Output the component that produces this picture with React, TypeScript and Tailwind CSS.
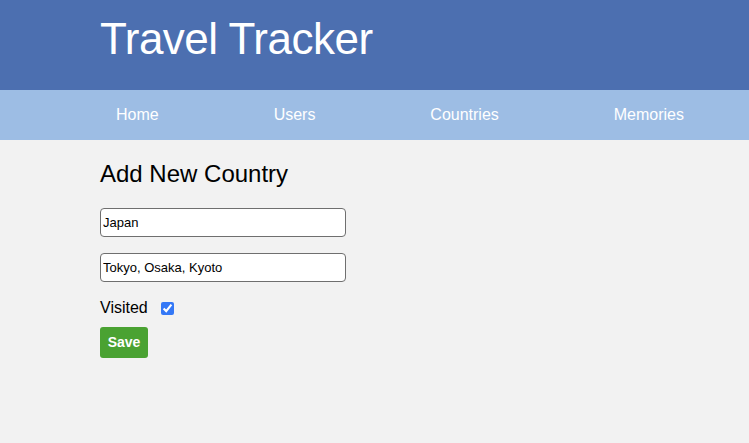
import React, { useState } from "react";

export default function App() {
  const [name, setName] = useState("Japan");
  const [cities, setCities] = useState("Tokyo, Osaka, Kyoto");
  const [visited, setVisited] = useState(true);

  const links = ["Home", "Users", "Countries", "Memories"];

  return (
    <div
      className="min-h-screen bg-[#f2f2f2] text-black"
      style={{ fontFamily: '"Liberation Sans", Arial, sans-serif' }}
    >
      {/* Header */}
      <header className="h-[90px] bg-[#4c6fb0] pl-[100px] pt-[17px]">
        <h1 className="text-[44px] leading-[44px] font-normal tracking-[-0.5px] text-white">
          Travel Tracker
        </h1>
      </header>

      {/* Nav */}
      <nav className="h-[50px] bg-[#9dbde4]">
        <ul className="ml-[100px] flex w-[600px] justify-between pt-[16px]">
          {links.map((l) => (
            <li key={l}>
              <a href="#" className="block px-4 text-[16px] leading-[18px] text-white">
                {l}
              </a>
            </li>
          ))}
        </ul>
      </nav>

      {/* Form */}
      <main className="pl-[100px] pt-[20px]">
        <h2 className="text-[24px] leading-[28px] font-normal">Add New Country</h2>
        <form className="mt-[20px] flex flex-col items-start" onSubmit={(e) => e.preventDefault()}>
          <input
            value={name}
            onChange={(e) => setName(e.target.value)}
            className="h-[29px] w-[246px] rounded-[4px] border border-[#6f6f6f] bg-white px-[2px] text-[13px] text-black outline-none"
          />
          <input
            value={cities}
            onChange={(e) => setCities(e.target.value)}
            className="mt-[16px] h-[29px] w-[246px] rounded-[4px] border border-[#6f6f6f] bg-white px-[2px] text-[13px] text-black outline-none"
          />
          <label className="mt-[17px] flex items-center text-[16px] leading-[18px]">
            <span>Visited</span>
            <input
              type="checkbox"
              checked={visited}
              onChange={(e) => setVisited(e.target.checked)}
              className="ml-[13px] h-[13px] w-[13px] accent-[#3478f6]"
            />
          </label>
          <button
            type="submit"
            className="mt-[10px] h-[31px] w-[48px] rounded-[3px] bg-[#4aa232] text-[14px] font-bold text-white"
          >
            Save
          </button>
        </form>
      </main>
    </div>
  );
}
